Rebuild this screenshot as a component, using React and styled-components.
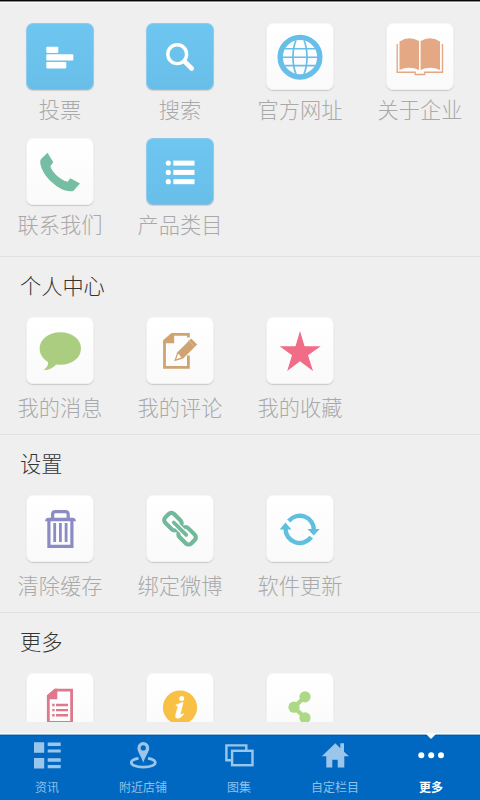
import React from 'react';
import styled, { createGlobalStyle } from 'styled-components';

const GlobalStyle = createGlobalStyle`
  * {
    box-sizing: border-box;
  }
  body {
    margin: 0;
    background: #efefef;
    font-family: 'Noto Sans CJK SC', sans-serif;
  }
`;

const Screen = styled.div`
  display: flex;
  flex-direction: column;
  width: 480px;
  height: 800px;
  overflow: hidden;
  background: #efefef;
`;

const StatusEdge = styled.div`
  flex: none;
  height: 3px;
  border-top: 1px solid #080808;
  background: linear-gradient(#8d8888 0 1px, #fafafa 1px);
`;

const Content = styled.main`
  flex: none;
  height: 719px;
  overflow: hidden;
`;

const Section = styled.section`
  height: ${(props) => (props.$first ? '253px' : '178px')};
  padding-top: ${(props) => (props.$first ? '20px' : '0')};
  border-top: ${(props) => (props.$first ? 'none' : '1px solid #e2e2e4')};
`;

const SectionTitle = styled.h2`
  height: 60px;
  margin: 0;
  padding-left: 20px;
  font-size: 21.2px;
  font-weight: 300;
  line-height: 55px;
  color: #333;
`;

const Grid = styled.div`
  display: grid;
  grid-template-columns: repeat(4, 120px);
  grid-auto-rows: 115px;
`;

const Cell = styled.div`
  display: flex;
  flex-direction: column;
  align-items: center;
`;

const Tile = styled.div`
  width: 68px;
  height: 67px;
  border-radius: 7px;
  border: 1px solid ${(props) => (props.$blue ? '#8fcbea' : '#f1f1f1')};
  border-top-color: ${(props) => (props.$blue ? '#8fcbe8' : '#f8f8f8')};
  border-bottom-color: ${(props) => (props.$blue ? '#86bedc' : '#f1f1f1')};
  background: ${(props) => (props.$blue
    ? 'linear-gradient(#6ec7f1, #68bee8)'
    : 'linear-gradient(#fff, #fafafa)')};
  box-shadow: 0 1px 1px ${(props) => (props.$blue ? '#d2cfcd' : '#c9c9c9')};
`;

const TileIcon = styled.svg`
  display: block;
  width: 68px;
  height: 66px;
  margin: -0.5px -1px;
`;

const Label = styled.span`
  margin-top: ${(props) => (props.$first ? '4px' : '8px')};
  font-size: 21.2px;
  font-weight: 300;
  line-height: 30px;
  white-space: nowrap;
  color: #a9a9a9;
`;

const TabBar = styled.nav`
  flex: none;
  display: flex;
  height: 67px;
  margin-top: 11px;
  border-top: 1px solid #fbfbf3;
  background: linear-gradient(#8db9dc 0 1px, #0257ae 1px 2px, #0168c1 2px);
`;

const Tabs = styled.div`
  display: flex;
  margin-left: -1px;
`;

const Tab = styled.div`
  position: relative;
  flex: none;
  display: flex;
  flex-direction: column;
  align-items: center;
  width: 96px;
  padding-top: 6px;
  font-size: 12px;
  font-weight: ${(props) => (props.$active ? 700 : 400)};
  line-height: 18px;
  color: ${(props) => (props.$active ? '#fff' : '#8fc0e8')};
`;

const TabIcon = styled.svg`
  display: block;
  width: 32px;
  height: 32px;
  margin-bottom: 6px;
  color: ${(props) => (props.$active ? '#fff' : '#9bc6eb')};
`;

const Notch = styled.span`
  position: absolute;
  top: 0;
  left: 43px;
  border: 5.5px solid transparent;
  border-top-color: #fafafa;
  border-bottom: 0;
`;

const icons = {
  vote: (
    <g fill="#fff">
      <rect x="20.3" y="22.7" width="12" height="6.2" rx="0.8" />
      <rect x="20.3" y="30.3" width="27" height="6.2" rx="0.8" />
      <rect x="20.3" y="38" width="20" height="6.4" rx="0.8" />
    </g>
  ),
  search: (
    <g fill="none" stroke="#fff">
      <circle cx="31.2" cy="30.2" r="9.4" strokeWidth="3.4" />
      <path d="M38.5 37.3 45.7 44.5" strokeWidth="4.6" strokeLinecap="round" />
    </g>
  ),
  globe: (
    <g fill="none" stroke="#66bee9">
      <circle cx="34" cy="33.2" r="19.8" strokeWidth="5.4" />
      <path d="M19 24.8h30M16 33.3h36M19 41.6h30" strokeWidth="1.6" />
      <path d="M30 16.5C26 25 26 41 30 50M38 16.5C42 25 42 41 38 50" strokeWidth="1.7" />
    </g>
  ),
  book: (
    <g>
      <path
        d="M13.5 17.5Q23 11.5 33 17V46Q23 41.5 13.5 46ZM34.6 17Q44.5 11.5 54 17.5V46Q44.5 41.5 34.6 46Z"
        fill="#e4a984"
      />
      <path
        d="M11.2 20V48.3H29.2V50.5H38.6V48.3H56.5V20"
        fill="none"
        stroke="#e4a984"
        strokeWidth="1.4"
      />
    </g>
  ),
  phone: (
    <path
      d="M21.5 13.7 27.3 23.3 24.3 27.3C26 33 34.5 41.5 41.7 42.7L44.3 39.2 54 44.5 47.5 51.7C45 53 39 52 34.5 49.5 24.5 44 16 34 14.4 25 14 22 14.3 21 15.3 19.8Z"
      fill="#75bea3"
    />
  ),
  list: (
    <g fill="#fff">
      {[24.1, 33.4, 42.7].map((y) => (
        <React.Fragment key={y}>
          <circle cx="22.3" cy={y} r="2.6" />
          <rect x="27.3" y={y - 2.5} width="21.2" height="5" />
        </React.Fragment>
      ))}
    </g>
  ),
  message: (
    <path
      d="M34.4 14.3C46.2 14.3 55 21.3 55 30.4S46.2 46.8 34.4 46.8Q32.5 46.8 30.2 46.4C27 50 23 52.2 17.7 52 21 49.5 22.5 47 22 44 16.7 41 13.6 36 13.6 30.6 13.6 21.5 22.6 14.3 34.4 14.3Z"
      fill="#abcd80"
    />
  ),
  comment: (
    <g>
      <path d="M42.4 19.5V16.4H26L18.5 23V49.4H42.4V37.5" fill="none" stroke="#d0a470" strokeWidth="2.8" />
      <path d="M17.1 23.5 26 15H28.2V25.3H17.1Z" fill="#d0a470" />
      <path d="M28.2 43.3 31.2 34.4 45.2 20.4 51.2 26.4 37.2 40.4Z" fill="#d0a470" />
      <path d="M30.2 41.3 32 36.1 33.6 36.7 34.1 38.3 35.5 39.2Z" fill="#fff" />
      <path d="M42 22 48.5 28.5" stroke="#e0c09a" strokeWidth="0.8" />
    </g>
  ),
  star: (
    <path
      d="M34 13 38.6 28.3H54.7L42 37.2 47 53 34 43.2 21.2 53 26 37.2 13.6 28.3H29.5Z"
      fill="#f06c87"
    />
  ),
  trash: (
    <g fill="none" stroke="#8c8cc4">
      <path d="M26.6 22V18.5Q26.6 15.7 29.4 15.7H39.2Q42.2 15.7 42.2 18.5V22" strokeWidth="3.2" />
      <path d="M19 25.2Q19.5 21.8 22.5 21.8H46.5Q49.5 21.8 50 25.2Z" fill="#8c8cc4" stroke="none" />
      <path d="M22.9 24V50.3H45.9V24" strokeWidth="3.2" />
      <path d="M28.7 27V46M34.4 27V46M40.1 27V46" strokeWidth="2.8" />
    </g>
  ),
  link: (
    <g transform="translate(34 32.7) rotate(45)" fill="none" stroke="#72b99c" strokeWidth="4.2">
      <rect x="-18.4" y="-6.2" width="16.8" height="12.4" rx="3.8" />
      <rect x="1.6" y="-6.2" width="16.8" height="12.4" rx="3.8" />
      <path d="M-9 0H9" stroke="#fdfdfd" strokeWidth="6.2" strokeLinecap="round" />
      <path d="M-8.8 0H8.8" strokeLinecap="round" strokeWidth="3.8" />
    </g>
  ),
  refresh: (
    <g fill="#5fbfdf">
      <path
        d="M22.8 25A14.1 14.1 0 0 1 47.9 34M45.2 41.1A14.2 14.2 0 0 1 19.5 32.5"
        fill="none"
        stroke="#5fbfdf"
        strokeWidth="4.4"
      />
      <path d="M41.5 33H53.8L47.7 39.6ZM13.7 33.4H25.5L19.4 26.6Z" />
    </g>
  ),
  report: (
    <g>
      <path d="M22.3 68V22L29 16.1H45.6V48.3H22.3" fill="none" stroke="#dc798c" strokeWidth="2.8" />
      <path d="M20.9 22.5 29 14.7H31.3V25.2H20.9Z" fill="#dc798c" />
      <path d="M26.2 31h2.4M26.2 36.1h2.4M26.2 41.3h2.4M30 31h12M30 36.1h12M30 41.3h12" stroke="#dc798c" strokeWidth="2.4" />
    </g>
  ),
  info: (
    <g>
      <circle cx="34" cy="33.5" r="17.1" fill="#f8c044" />
      <circle cx="35.7" cy="24.4" r="2.5" fill="#fff" />
      <path
        d="M30 31Q33 30 36 28.6H37.1L34.2 40.2Q33.9 42 37.3 39.5L37.6 40.2Q34.5 44.3 31.8 44.3 29 44.3 29.7 41L32 32.3Q32.3 31.2 30 32Z"
        fill="#fff"
        stroke="#fff"
        strokeWidth="0.6"
      />
    </g>
  ),
  share: (
    <g fill="#add886">
      <path d="M39 22.7 28 33.2 39 43.8" fill="none" stroke="#add886" strokeWidth="4.2" />
      <circle cx="39" cy="22.8" r="5.6" />
      <circle cx="28" cy="33.2" r="5.6" />
      <circle cx="39" cy="43.8" r="5.6" />
    </g>
  ),
};

const tabIcons = {
  news: (
    <path
      d="M3 2.3h10.2v10.4H3ZM3 18h10.2v10.4H3ZM16.7 2.6h13v3.4h-13ZM16.7 9.4h13v3.2h-13ZM16.7 18.3h13v3.4h-13ZM16.7 25h13v3.3h-13Z"
      fill="currentColor"
    />
  ),
  nearby: (
    <g>
      <path
        d="M16.3 2A5.9 5.9 0 0 1 22.2 7.9C22.2 12 18.5 15.5 16.3 22.8 14.1 15.5 10.4 12 10.4 7.9A5.9 5.9 0 0 1 16.3 2ZM16.3 5.3A2.6 2.6 0 1 0 16.3 10.5 2.6 2.6 0 1 0 16.3 5.3Z"
        fill="currentColor"
        fillRule="evenodd"
      />
      <path
        d="M11.5 18.4C3.5 19.5 2.5 23.4 7 25.5 12 27.7 20.6 27.7 25.6 25.5 30.1 23.4 29 19.5 21 18.4"
        fill="none"
        stroke="currentColor"
        strokeWidth="2.8"
      />
    </g>
  ),
  gallery: (
    <g fill="none" stroke="currentColor" strokeWidth="2.4">
      <path d="M8.5 20.2H3.4V5.4H23.3V10" />
      <rect x="9.1" y="10.8" width="20.4" height="14.4" />
    </g>
  ),
  home: (
    <path
      d="M16.3 3.3 21.3 8.2V3.3H25V11.8L30 16.3H25.3V27.5H18.7V19.7H13.3V27.5H7.3V16.3H2.8Z"
      fill="currentColor"
    />
  ),
  more: (
    <g fill="currentColor">
      <circle cx="6.3" cy="15.2" r="3" />
      <circle cx="16.2" cy="15.2" r="3" />
      <circle cx="26" cy="15.2" r="3" />
    </g>
  ),
};

const sections = [
  {
    items: [
      { icon: 'vote', label: '投票', blue: true },
      { icon: 'search', label: '搜索', blue: true },
      { icon: 'globe', label: '官方网址' },
      { icon: 'book', label: '关于企业' },
      { icon: 'phone', label: '联系我们' },
      { icon: 'list', label: '产品类目', blue: true },
    ],
  },
  {
    title: '个人中心',
    items: [
      { icon: 'message', label: '我的消息' },
      { icon: 'comment', label: '我的评论' },
      { icon: 'star', label: '我的收藏' },
    ],
  },
  {
    title: '设置',
    items: [
      { icon: 'trash', label: '清除缓存' },
      { icon: 'link', label: '绑定微博' },
      { icon: 'refresh', label: '软件更新' },
    ],
  },
  {
    title: '更多',
    items: [
      { icon: 'report' },
      { icon: 'info' },
      { icon: 'share' },
    ],
  },
];

const tabs = [
  { icon: 'news', label: '资讯' },
  { icon: 'nearby', label: '附近店铺' },
  { icon: 'gallery', label: '图集' },
  { icon: 'home', label: '自定栏目' },
  { icon: 'more', label: '更多', active: true },
];

const App = () => (
  <>
    <GlobalStyle />
    <Screen>
      <StatusEdge />
      <Content>
        {sections.map((section) => (
          <Section key={section.title || 'main'} $first={!section.title}>
            {section.title && <SectionTitle>{section.title}</SectionTitle>}
            <Grid>
              {section.items.map((item) => (
                <Cell key={item.icon}>
                  <Tile $blue={item.blue}>
                    <TileIcon viewBox="0 0 68 66">{icons[item.icon]}</TileIcon>
                  </Tile>
                  {item.label && <Label $first={!section.title}>{item.label}</Label>}
                </Cell>
              ))}
            </Grid>
          </Section>
        ))}
      </Content>
      <TabBar>
        <Tabs>
          {tabs.map((tab) => (
            <Tab key={tab.icon} $active={tab.active}>
              {tab.active && <Notch />}
              <TabIcon viewBox="0 0 32 32" $active={tab.active}>{tabIcons[tab.icon]}</TabIcon>
              {tab.label}
            </Tab>
          ))}
        </Tabs>
      </TabBar>
    </Screen>
  </>
);

export default App;
